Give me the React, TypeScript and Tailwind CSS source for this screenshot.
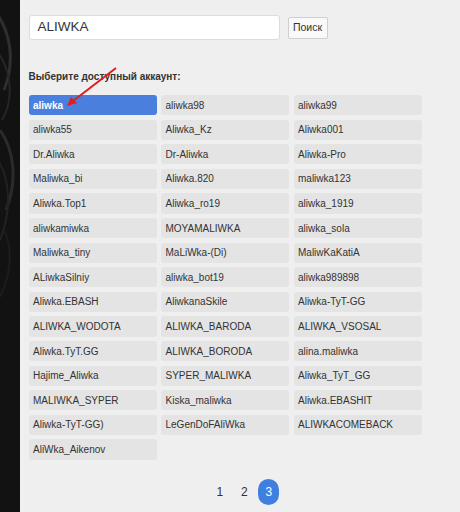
import React from 'react';

const accounts = [
  'aliwka', 'aliwka98', 'aliwka99',
  'aliwka55', 'Aliwka_Kz', 'Aliwka001',
  'Dr.Aliwka', 'Dr-Aliwka', 'Aliwka-Pro',
  'Maliwka_bi', 'Aliwka.820', 'maliwka123',
  'Aliwka.Top1', 'Aliwka_ro19', 'aliwka_1919',
  'aliwkamiwka', 'MOYAMALIWKA', 'aliwka_sola',
  'Maliwka_tiny', 'MaLiWka-(Di)', 'MaliwKaKatiA',
  'ALiwkaSilniy', 'aliwka_bot19', 'aliwka989898',
  'Aliwka.EBASH', 'AliwkanaSkile', 'Aliwka-TyT-GG',
  'ALIWKA_WODOTA', 'ALIWKA_BARODA', 'ALIWKA_VSOSAL',
  'Aliwka.TyT.GG', 'ALIWKA_BORODA', 'alina.maliwka',
  'Hajime_Aliwka', 'SYPER_MALIWKA', 'Aliwka_TyT_GG',
  'MALIWKA_SYPER', 'Kiska_maliwka', 'Aliwka.EBASHIT',
  'Aliwka-TyT-GG)', 'LeGenDoFAliWka', 'ALIWKACOMEBACK',
  'AliWka_Aikenov',
];

export default function App() {
  const font = { fontFamily: '"Liberation Sans", Arial, sans-serif' };

  return (
    <div className="flex w-[460px] h-[512px] overflow-hidden" style={font}>
      {/* Left dark strip */}
      <div className="w-[20px] h-full bg-[#121212] shrink-0 overflow-hidden">
        <svg width="20" height="512" viewBox="0 0 20 512">
          <rect width="20" height="512" fill="#121212" />
          <path d="M-6 10 C 10 30, 16 60, 4 90" stroke="#2f2f2f" strokeWidth="3" fill="none" />
          <path d="M-4 50 C 12 70, 14 100, 2 120" stroke="#262626" strokeWidth="2" fill="none" />
          <path d="M0 130 C 14 150, 18 180, 6 210" stroke="#2b2b2b" strokeWidth="3" fill="none" />
          <path d="M-2 160 C 10 180, 12 210, 0 240" stroke="#222" strokeWidth="2" fill="none" />
          <path d="M4 230 C 14 250, 10 280, -2 300" stroke="#1d1d1d" strokeWidth="2" fill="none" />
        </svg>
      </div>

      {/* Main panel */}
      <div className="relative flex-1 bg-[#efefef] pl-[8.5px] flex flex-col">
        {/* Search */}
        <div className="flex items-center mt-[15px] gap-[8px]">
          <div className="w-[251px] h-[25px] bg-white border border-[#dcdcdc] rounded-[3px] flex items-center pl-[8px] text-[13.5px] text-[#333]">
            ALIWKA
          </div>
          <button className="w-[40px] h-[22px] bg-[#f9f9f9] border border-[#cfcfcf] rounded-[2px] text-[10.5px] text-[#333] flex items-center justify-center">
            Поиск
          </button>
        </div>

        {/* Heading */}
        <div className="mt-[30px] h-[14px] text-[10px] font-bold text-[#333] leading-[14px]">
          Выберите доступный аккаунт:
        </div>

        {/* Accounts grid */}
        <div className="mt-[11px] grid grid-cols-[128px_128px_128px] gap-x-[4.5px] gap-y-[4.3px]">
          {accounts.map((name, i) => (
            <div
              key={name}
              className={
                i === 0
                  ? 'h-[20.3px] rounded-[3px] bg-[#4a7fdd] text-white font-bold text-[10px] pl-[4.5px] flex items-center'
                  : 'h-[20.3px] rounded-[3px] bg-[#e4e4e4] text-[#333] text-[10px] pl-[4.5px] flex items-center'
              }
            >
              {name}
            </div>
          ))}
        </div>

        {/* Pagination */}
        <div className="mt-[19px] flex justify-center items-center gap-[3.5px] text-[12px] text-[#333]">
          <span className="w-[21px] h-[26px] flex items-center justify-center">1</span>
          <span className="w-[21px] h-[26px] flex items-center justify-center">2</span>
          <span className="w-[21px] h-[26px] flex items-center justify-center rounded-full bg-[#3f7fe0] text-white">3</span>
        </div>

        {/* Red arrow */}
        <svg className="absolute left-0 top-0 pointer-events-none" width="440" height="512" viewBox="0 0 440 512">
          <line x1="96" y1="68" x2="53" y2="101" stroke="#e11d1d" strokeWidth="2" />
          <polygon points="47,106 51,97 57,103" fill="#e11d1d" />
        </svg>
      </div>
    </div>
  );
}
